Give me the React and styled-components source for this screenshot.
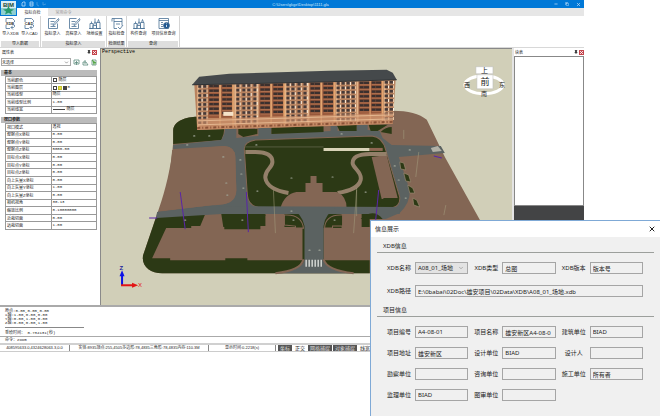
import styled, { createGlobalStyle, css } from 'styled-components';
import { ChevronDown, X, Pin, Minus, Copy } from 'lucide-react';

const GlobalStyle = createGlobalStyle`
	* {
		box-sizing: border-box;
	}

	body {
		margin: 0;
		background: #fff;
		color: #222;
		font-family: 'Liberation Sans', 'Noto Sans CJK SC', sans-serif;
	}

	button,
	input,
	select {
		margin: 0;
		padding: 0;
		font: inherit;
		color: inherit;
	}
`;

const Page = styled.main`
	display: grid;
	width: 100%;
	align-items: start;
`;

const MainWindow = styled.section`
	grid-area: 1 / 1;
	min-width: 0;
	margin-right: 76px;
	display: flex;
	flex-direction: column;
	background: #fff;
	font-size: 4px;
	line-height: 5px;
`;

/* title bar and tabs */

const Header = styled.header`
	display: grid;
	grid-template-columns: 17px 1fr;
	grid-template-rows: 8px 8px;
	background: #e6e6e6;
`;

const LogoButton = styled.button`
	grid-row: 1 / 3;
	border: none;
	background: #0078d7;
	display: flex;
	align-items: center;
	justify-content: center;
`;

const TitleBar = styled.div`
	display: grid;
	grid-template-columns: 1fr 1fr 1fr;
	align-items: center;
	padding: 0 3px;
	background: #0078d7;
	color: #cfe6fa;
`;

const TitleText = styled.span`
	text-align: center;
	white-space: nowrap;
`;

const IconButton = styled.button`
	display: flex;
	align-items: center;
	justify-content: center;
	width: ${props => props.$size || 6}px;
	height: ${props => props.$size || 6}px;
	border: none;
	background: ${props => props.$bg || 'transparent'};
	color: ${props => props.$color || 'inherit'};
`;

const ButtonStrip = styled.div`
	display: flex;
	align-items: center;
	gap: ${props => props.$gap || 2}px;
	justify-content: ${props => (props.$end ? 'flex-end' : 'flex-start')};
`;

const TabRow = styled.nav`
	display: flex;
`;

const Tab = styled.button`
	width: 31px;
	border: none;
	background: ${props => (props.$active ? '#fff' : 'transparent')};
	color: ${props => (props.$active ? '#333' : '#999')};
`;

/* ribbon */

const Ribbon = styled.div`
	display: flex;
	height: 32px;
	border-bottom: 1px solid #d8d8d8;
`;

const RibbonGroup = styled.div`
	display: flex;
	flex-direction: column;
	width: ${props => props.$width}px;
	padding: 1px 1px 0;
	border-right: 1px solid #d4d4d4;
`;

const RibbonButtons = styled.div`
	flex: 1;
	display: flex;
	justify-content: space-around;
`;

const RibbonButton = styled.button`
	display: flex;
	flex-direction: column;
	align-items: center;
	gap: 1px;
	border: none;
	background: none;
	white-space: nowrap;
	line-height: 5px;
`;

const GroupTitle = styled.div`
	background: #dedede;
	text-align: center;
	line-height: 6px;
`;

/* docked panels */

const Workspace = styled.div`
	display: grid;
	grid-template-columns: 101px 1fr 72px;
	height: 257px;
`;

const PropertyPanel = styled.aside`
	display: flex;
	flex-direction: column;
	padding: 0 3px 0 1px;
	border-right: 1px solid #8a8a8a;
`;

const PanelHeader = styled.div`
	display: flex;
	align-items: center;
	justify-content: space-between;
	height: 8px;
	padding-left: 1px;
`;

const SelectionRow = styled.div`
	display: flex;
	align-items: center;
	gap: 2px;
	height: 12px;
	margin-bottom: 2px;
`;

const Picker = styled.div`
	flex: 1;
	display: grid;
	grid-template-columns: 1fr ${props => props.$arrow}px;
	align-items: center;
	height: ${props => props.$height}px;
	border: 1px solid #a8a8a8;
	background: ${props => props.$bg || '#fff'};

	select {
		grid-area: 1 / 1 / 2 / 3;
		width: 100%;
		height: 100%;
		padding-left: ${props => props.$inset || 0}px;
		border: none;
		background: transparent;
		appearance: none;
	}

	svg {
		grid-area: 1 / 2 / 2 / 3;
		pointer-events: none;
	}
`;

const TableWrap = styled.div`
	padding-left: 4px;
`;

const PropertyTable = styled.table`
	width: 100%;
	height: ${props => props.$height}px;
	margin-bottom: 3px;
	border-collapse: collapse;
	table-layout: fixed;

	caption {
		height: 6px;
		margin-left: -4px;
		padding-left: 3px;
		background: #bbb;
		text-align: left;
		font-weight: bold;
		line-height: 6px;
	}

	th,
	td {
		padding: 0 1px;
		border: 1px solid #999;
		text-align: left;
		font-weight: normal;
		line-height: 5px;
		white-space: nowrap;
	}

	td {
		font-family: 'Liberation Mono', 'Noto Sans CJK SC', monospace;
	}
`;

const LayerValue = styled.span`
	display: flex;
	align-items: center;
	gap: ${props => props.$gap || 1}px;
`;

const Swatch = styled.i`
	width: 4px;
	height: 4px;
	border: 1px solid ${props => props.$edge || '#444'};
	background: ${props => props.$color || '#fff'};
`;

const LineSample = styled.i`
	width: 12px;
	border-top: 1px solid #444;
`;

const Viewport = styled.div`
	position: relative;
	overflow: hidden;
	border-top: 1px solid #888;
	background: #d1cfb8;

	> svg {
		display: block;
		width: 100%;
		height: 100%;
	}
`;

const ViewName = styled.span`
	position: absolute;
	top: 1px;
	left: 1px;
	font-family: 'Liberation Mono', monospace;
	font-size: 5px;
	line-height: 5px;
	color: #000;
`;

const BlockPanel = styled.aside`
	display: flex;
	flex-direction: column;
	padding-left: 2px;
	background: #e4e4e4;
`;

const BlockHeader = styled(PanelHeader)`
	background: #fff;
`;

const BlockList = styled.div`
	height: 150px;
	border: 1px solid #888;
	background: #fff;
`;

const BlockPreview = styled.div`
	flex: 1;
	background: #434445;
`;

/* console and status bar */

const Console = styled.div`
	border-top: 2px solid #aaa;
	padding: 0 5px;
	font-family: 'Liberation Mono', 'Noto Sans CJK SC', monospace;
	line-height: 4px;

	p {
		margin: 0;
	}
`;

const LogBlock = styled.div`
	padding-top: 2px;
	height: 20px;
`;

const LogRule = styled.hr`
	width: 79px;
	margin: 0 0 3px;
	border: none;
	border-top: 1px solid #888;
`;

const CommandRow = styled.label`
	display: flex;
	align-items: center;
	height: 7px;
	margin: 1px -5px 0;
	padding-left: 5px;
	border-top: 1px solid #aaa;

	input {
		flex: 1;
		height: 5px;
		border: none;
		background: none;
		outline: none;
	}
`;

const StatusBar = styled.footer`
	display: flex;
	height: 9px;
	border-top: 2px solid #d0d0d0;
	border-bottom: 1px solid #ccc;
	line-height: 6px;
`;

const StatusCell = styled.span`
	width: ${props => props.$width}px;
	border-right: 1px solid #888;
	text-align: center;
	white-space: nowrap;
`;

const StatusToggles = styled.div`
	display: flex;
	gap: 1px;
	padding-left: 2px;
	font-size: 5px;
`;

const Toggle = styled.button`
	padding: 0 2px;
	border: none;
	white-space: nowrap;
	background: ${props => (props.$on ? '#555' : '#fff')};
	color: ${props => (props.$on ? '#ddd' : '#222')};
`;

/* information dialog */

const Dialog = styled.section`
	grid-area: 1 / 1;
	justify-self: end;
	z-index: 1;
	margin-top: 220px;
	width: 290px;
	border-top: 1px solid #7fa9d6;
	border-left: 1px solid #7fa9d6;
	background: #f0f0f0;
	font-family: 'Noto Sans', 'Noto Sans CJK SC', sans-serif;
	font-size: 6px;
	line-height: 8px;
	padding-bottom: 17px;
`;

const DialogHeader = styled.header`
	display: flex;
	align-items: center;
	justify-content: space-between;
	height: 16px;
	padding: 0 4px;
	background: #fff;

	h1 {
		margin: 0;
		font-size: 6px;
		font-weight: normal;
	}
`;

const SectionTitle = styled.h2`
	margin: 0 6px;
	padding: ${props => (props.$first ? 5 : 9)}px 6px 2px;
	border-bottom: 1px solid #9c9f9c;
	font-size: 6px;
	font-weight: normal;
	line-height: 8px;
`;

const FieldGrid = styled.div`
	display: grid;
	grid-template-columns: repeat(3, 1fr);
	gap: ${props => props.$rowGap}px 6px;
	padding: 9px 17px 0 16px;
`;

const FieldRow = styled.div`
	display: grid;
	grid-template-columns: 24px 1fr;
	column-gap: 4px;
	align-items: center;
	${props =>
		props.$wide &&
		css`
			grid-column: 1 / -1;
		`}

	label {
		text-align: center;
		white-space: nowrap;
	}
`;

const TextInput = styled.input`
	width: 100%;
	min-width: 0;
	height: 12px;
	padding: 0 2px;
	border: 1px solid #a5a5a5;
	background: #f0f0f0;
`;

const basicProps = [
	{ name: '当前颜色', value: '随层', swatch: true },
	{ name: '当前图层', value: '0', layer: true },
	{ name: '当前线型', value: '随层' },
	{ name: '当前线型比例', value: '1.00' },
	{ name: '当前线宽', value: '随层', line: true },
];

const viewProps = [
	{ name: '视口模式', value: '透视' },
	{ name: '观察点X坐标', value: '0.00' },
	{ name: '观察点Y坐标', value: '0.00' },
	{ name: '观察点Z坐标', value: '5000.00' },
	{ name: '目标点X坐标', value: '0.00' },
	{ name: '目标点Y坐标', value: '0.00' },
	{ name: '目标点Z坐标', value: '0.00' },
	{ name: '向上矢量X坐标', value: '0.00' },
	{ name: '向上矢量Y坐标', value: '1.00' },
	{ name: '向上矢量Z坐标', value: '0.00' },
	{ name: '相机视角', value: '30.13' },
	{ name: '缩放比例', value: '0.10000000' },
	{ name: '近裁切面', value: '0.00' },
	{ name: '远裁切面', value: '1.00' },
];

const ribbonGroups = [
	{
		title: '导入数据',
		width: 41,
		items: [
			{ label: '导入XDB', icon: 'file', tag: 'XDB' },
			{ label: '导入CAD', icon: 'file', tag: 'CAD' },
		],
	},
	{
		title: '指标录入',
		width: 66,
		items: [
			{ label: '指标录入', icon: 'edit' },
			{ label: '高程录入', icon: 'edit' },
			{ label: '场地设置', icon: 'site' },
		],
	},
	{ title: '检测结果', width: 20, items: [{ label: '指标检查', icon: 'check' }] },
	{
		title: '查询',
		width: 53,
		items: [
			{ label: '构件查询', icon: 'site' },
			{ label: '项目信息查询', icon: 'info' },
		],
	},
];

const projectFields = [
	{ id: 'code', label: '项目编号', value: 'A4-08-01' },
	{ id: 'name', label: '项目名称', value: '雄安新区A4-08-0' },
	{ id: 'builder', label: '建筑单位', value: 'BIAD' },
	{ id: 'address', label: '项目地址', value: '雄安新区' },
	{ id: 'designUnit', label: '设计单位', value: 'BIAD' },
	{ id: 'designer', label: '设计人', value: '' },
	{ id: 'survey', label: '勘察单位', value: '' },
	{ id: 'consult', label: '咨询单位', value: '' },
	{ id: 'construct', label: '施工单位', value: '所有者' },
	{ id: 'supervise', label: '监理单位', value: 'BIAD' },
	{ id: 'review', label: '图审单位', value: '' },
];

function RibbonIcon({ type, tag }) {
	return (
		<svg width="14" height="13" viewBox="0 0 14 13" fill="none" stroke="#4a7196" strokeWidth="0.8">
			{type === 'file' && (
				<>
					<path d="M3 5V1.5h6.5l2 2V5M3 8v3.5h4M10 8.5l-2 2 2 2M8 10.5h2.5q1.500-.5 1-2.500" />
					<text x="7" y="7.500" textAnchor="middle" fontSize="4" fontWeight="bold" fill="#333" stroke="none">
						{tag}
					</text>
				</>
			)}
			{type === 'edit' && <path d="M11.500 6.500v5H2.500v-10h7M4.500 4.500h4M4.500 7h2.500M4.500 9.500h5M12.500 1.500 7.500 7l-.5 1.500 1.500-.5 4.500-5z" />}
			{type === 'site' && <path d="M2 11.500v-5h3v5zM5 11.500v-3h3.500v3M8.500 11.500v-6h3.500v6zM5.500 8 7 4.500 8.500 8M7 1.500v3M9.500 5.500l1-3 1 3M3.500 6.500v-2M1 11.500h12" />}
			{type === 'check' && <path d="M2 1.500h10v7M2 1.500v3M4 1.500v10h3M4 4.500h8M6 7h4M8 10l2 2 3-4" />}
			{type === 'info' && (
				<>
					<path d="M2 1.500h9.500v10H2zM2 3.500h9.500M4 5.500h2M4 7.500h2M4 9.500h2" />
					<circle cx="9.500" cy="8.500" r="3" fill="#1e5791" />
					<path d="M9.500 8v2M9.500 6.500v.7" stroke="#fff" />
				</>
			)}
		</svg>
	);
}

function Logo() {
	return (
		<svg width="15" height="14" viewBox="0 0 15 14">
			<rect width="15" height="14" fill="#d9eef5" />
			<path d="M0 7h15v7H0z" fill="#8fcfd0" />
			<text x="7.500" y="5.600" textAnchor="middle" fontSize="6" fontWeight="bold" fill="#1b4630">
				BIM
			</text>
			<path d="m7.500 5 1.500 3 4 .5-3 2 1 3-3.500-1.700L4 13.500l1-3-3-2 4-.5z" fill="#27996a" />
		</svg>
	);
}

const balconyBays = [209, 222, 260, 273, 310, 323, 359, 371];
const windowBays = [199, 204, 237, 243, 248, 254, 287, 292, 298, 304, 337, 342, 347, 352, 385, 390];
const floors = [0, 1, 2, 3, 4, 5, 6];

// roof line drops slightly from the right end to the left one
const floorY = (x, floor) => 85.5 - (x - 195) / 45 + floor * 4.5;

function Building() {
	return (
		<g>
			<path d="M195 84 396 79 393 124 330 126 198 130Z" fill="#b9835f" />
			{[198, 235, 257, 285, 308, 336, 357, 384].map(x => (
				<path key={x} d={`M${x} ${85 - (x - 195) / 45}h2v43h-2z`} fill="#e3b388" />
			))}
			{balconyBays.map(x => (
				<g key={x}>
					<rect x={x} y={floorY(x, 0)} width="11" height="33" fill="#98583b" />
					{floors.map(f => (
						<g key={f}>
							<rect x={x + 1} y={floorY(x, f)} width="9.500" height="2.400" fill="#3b302e" />
							<path d={`M${x + 1} ${floorY(x, f) + 3.2}h10`} stroke="#b87a56" strokeWidth="0.700" />
							<path d={`M${x + 5} ${floorY(x, f)}v2.400`} stroke="#7b5341" strokeWidth="0.600" />
						</g>
					))}
					<rect x={x + 11} y={floorY(x, 0) - 1} width="1.500" height="43" fill="#e4a670" />
				</g>
			))}
			{windowBays.map((x, i) => (
				<g key={x}>
					{floors.concat(7, 8).map(f => (
						<g key={f}>
							<rect x={x} y={floorY(x, f)} width="3.200" height="2.600" fill="#463a39" />
							<path
								d={`M${x + 3.8} ${floorY(x, f)}v3`}
								stroke={(i + f) % 3 ? '#e6c5a5' : '#fff2df'}
								strokeWidth="1"
							/>
						</g>
					))}
				</g>
			))}
			<path d="M198 119 330 115 394 113 393 124 330 126 198 130Z" fill="#c98d69" opacity="0.650" />
			<path d="M199 121 394 115M199 125 394 119" stroke="#f0c8a0" strokeWidth="0.700" fill="none" />
			<path d="M198 128 393 122" stroke="#8a5237" strokeWidth="2" strokeDasharray="3 2 1 2" fill="none" />
			<path d="M224 112h10v4h-10z" fill="#f5e2c8" />
			<path d="M193 85 200 77 230 74 330 71 387 70 393 73 397 80 330 82Z" fill="#45494b" />
			<path d="M193 85 330 82 397 80" stroke="#2f3335" fill="none" />
		</g>
	);
}

function SiteModel() {
	const brown = '#836654';
	const green = '#2c3915';
	const road = '#5b6261';
	return (
		<svg viewBox="102 49 410 256" preserveAspectRatio="xMidYMid slice">
			<path
				d="M198 117C187 117 175 121 174 130V143C172 168 166 190 160 208L144 255C142 266 151 273 163 273H510L480 220 445 157 427 120Q416 111 393 111Z"
				fill={brown}
			/>
			{/* lawns beside the building */}
			<path d="M198 117C187 117 175 121 174 130V144L222 140Q225 134 225 128L198 130Z" fill={green} />
			<path d="M174 145 222 140Q226 134 226 126H237V138L259 136V125H272V134L331 131V124H338V131L357 130V124H368V130L380 131 383 138 392 145 441 146 445 153 399 157 410 190Q411 202 400 213L386 219H157L158 212 213 205Q236 206 237 190L236 157Q236 147 225 146L174 149Z" fill={road} />
			<path d="M239 129H258V134L244 137 239 134ZM272 127 324 125V132L272 134ZM337 125H357V131H340ZM369 125H388L378 131H371ZM381 132Q386 127 392 127V134Z" fill={green} />
			<path d="M176 150 225 146Q236 147 236 157L237 190Q237 202 225 204L160 211Q171 183 173 150Z" fill={brown} />
			{/* central garden */}
			<path d="M245 150Q244 142 256 140L372 136Q383 137 386 150L400 197Q401 207 390 208H265Q249 208 248 195Z" fill={green} stroke={brown} />
			<path d="M372 157 387 155 398 198 382 199Z" fill={brown} />
			<path d="M245 147H324" stroke="#81806a" strokeWidth="0.500" />
			<path d="M246 152H256C268 152 273 156 273 162S265 170 266 178 277 191 289 193M387 154H370C358 154 353 158 353 163S363 172 361 180 350 191 338 193" fill="none" stroke="#94806a" strokeWidth="4" />
			<path d="M281 208Q285 194 297 192H306V183H311V176H317V183H323V192H337Q347 196 347 208Z" fill={brown} />
			<path d="M324 148H370V151H324Z" fill="#d8d3b7" />
			<path d="M370 148H383V151H370Z" fill="#8e6752" />
			{/* lower lawns and forecourt */}
			<path d="M157 217 222 213H370V273H163C151 273 142 266 144 255Z" fill={green} />
			<path d="M167 228H192V226H201L206 214H222L224 227H225V229H261V226H266V216Q267 214 265 214H285V227H303V260H248V258H226V260H171V258H153Z" fill={brown} />
			<path d="M324 228H342V214H362V227H372V260H324Z" fill={brown} />
			<path d="M157 218 222 214H400V207L213 206 158 212Z" fill={road} />
			<path d="M285 215Q302 214 304 228H296V226L285 225ZM343 215Q326 214 325 228H333V226H343Z" fill={green} stroke={brown} />
			<path d="M290 207H338Q325 214 324 226V259Q327 270 353 273H277Q303 270 305 259V226Q303 214 290 207Z" fill={road} />
			<path d="M276 273Q302 270 304 259M354 273Q327 270 324 259" fill="none" stroke={brown} strokeWidth="2" />
			<path d="M306 263H324" stroke="#e4e6e1" strokeWidth="7" strokeDasharray="1.300 1.700" />
			<path d="M366 215Q376 210 383 219H361ZM384 198H397L393 206 380 205Z" fill={green} />
			<path d="M400 162 404 163 406 170 401 169ZM404 173 409 175 411 182 406 181ZM408 185 413 188 415 193 410 193ZM413 198 417 200 420 207 414 205Z" fill={green} stroke="#98866f" strokeWidth="0.700" />
			<path d="M431 148 438 146 442 151 433 152Z" fill="#b2b1a6" />
			{/* survey lines */}
			<g fill="none" strokeWidth="1" stroke="#5a25a8">
				<path d="M181 192 186 229M247 192 249 232M379 190 376 220M150 218H158M434 156 442 158" />
			</g>
			<path d="M274 190 276 233M357 190 354 233M357 188V216M419 152 416 177M404 130V139M446 205 444 215" fill="none" stroke="#a7a080" strokeWidth="0.500" />
			<g fill="#a2a79a">
				{[[188, 145], [241, 160], [242, 174], [244, 188], [224, 157], [227, 183], [228, 195], [292, 178], [333, 177], [258, 191], [366, 192], [186, 220], [243, 220], [294, 220], [335, 220], [310, 250], [320, 250], [395, 166], [399, 180], [406, 198], [410, 150], [257, 145], [372, 143], [195, 136], [210, 136], [342, 134], [292, 211]].map(([x, y]) => (
					<ellipse key={`${x}-${y}`} cx={x} cy={y} rx="1.200" ry="0.600" />
				))}
			</g>
			<Building />
			{/* view cube */}
			<ellipse cx="484" cy="85" rx="19" ry="9" fill="none" stroke="#fff" strokeWidth="3" />
			<path d="M476 67H493V74H476ZM477 75H493V89H477Z" fill="#fff" stroke="#bbb" strokeWidth="0.500" />
			<g fontFamily="Noto Sans CJK SC, sans-serif" textAnchor="middle" fill="#222">
				<text x="484.500" y="73" fontSize="7">上</text>
				<text x="485" y="85.500" fontSize="9">前</text>
				<text x="467" y="87" fontSize="6">西</text>
				<text x="502" y="87" fontSize="6">东</text>
				<text x="484" y="96" fontSize="6">南</text>
			</g>
			{/* axes */}
			<path d="M123 285V275" stroke="#0c12e8" strokeWidth="2" />
			<path d="M123 270 125.500 276H120.500Z" fill="#0c12e8" />
			<path d="M122 285H134" stroke="#e31515" strokeWidth="2" />
			<path d="M139 285 133 287.500V282.500Z" fill="#e31515" />
			<text x="120.500" y="270" fontSize="6" fontWeight="bold" fill="#1c1c9c">Z</text>
			<text x="139" y="287" fontSize="6" fill="#e31515">X</text>
		</svg>
	);
}

function DockButtons() {
	return (
		<ButtonStrip $gap={1}>
			<IconButton $size={5} aria-label="固定">
				<Pin size={4} fill="#222" strokeWidth={3} />
			</IconButton>
			<IconButton $size={5} $bg="#c4434b" $color="#fff" aria-label="关闭">
				<X size={5} strokeWidth={4} />
			</IconButton>
		</ButtonStrip>
	);
}

function Properties({ title, rows, height }) {
	return (
		<TableWrap>
			<PropertyTable $height={height}>
				<caption>{title}</caption>
				<tbody>
					{rows.map(row => (
						<tr key={row.name}>
							<th scope="row">{row.name}</th>
							<td>
								<LayerValue $gap={row.layer ? 1 : 2}>
									{(row.swatch || row.layer) && <Swatch />}
									{row.layer && <Swatch $color="#e8e040" $edge="#c4c030" />}
									{row.layer && <Swatch $color="#444" />}
									{row.line && <LineSample />}
									{row.value}
								</LayerValue>
							</td>
						</tr>
					))}
				</tbody>
			</PropertyTable>
		</TableWrap>
	);
}

function InfoDialog() {
	return (
		<Dialog role="dialog" aria-labelledby="dialogTitle">
			<DialogHeader>
				<h1 id="dialogTitle">信息展示</h1>
				<IconButton $size={8} aria-label="关闭">
					<X size={8} strokeWidth={3} />
				</IconButton>
			</DialogHeader>
			<SectionTitle $first>XDB信息</SectionTitle>
			<FieldGrid $rowGap={11}>
				<FieldRow>
					<label htmlFor="xdbName">XDB名称</label>
					<Picker $arrow={9} $height={12} $bg="#e3e3e3" $inset={2}>
						<select id="xdbName">
							<option>A08_01_场地</option>
						</select>
						<ChevronDown size={6} color="#777" />
					</Picker>
				</FieldRow>
				<FieldRow>
					<label htmlFor="xdbType">XDB类型</label>
					<TextInput id="xdbType" defaultValue="总图" />
				</FieldRow>
				<FieldRow>
					<label htmlFor="xdbVersion">XDB版本</label>
					<TextInput id="xdbVersion" defaultValue="版本号" />
				</FieldRow>
				<FieldRow $wide>
					<label htmlFor="xdbPath">XDB路径</label>
					<TextInput id="xdbPath" defaultValue="E:\0babai\02Doc\雄安项目\02Data\XDB\A08_01_场地.xdb" />
				</FieldRow>
			</FieldGrid>
			<SectionTitle>项目信息</SectionTitle>
			<FieldGrid $rowGap={9}>
				{projectFields.map(field => (
					<FieldRow key={field.id}>
						<label htmlFor={field.id}>{field.label}</label>
						<TextInput id={field.id} defaultValue={field.value} />
					</FieldRow>
				))}
			</FieldGrid>
		</Dialog>
	);
}

export default function App() {
	return (
		<Page>
			<GlobalStyle />
			<MainWindow>
				<Header>
					<LogoButton aria-label="BIM">
						<Logo />
					</LogoButton>
					<TitleBar>
						<ButtonStrip>
							<svg width="30" height="6" viewBox="0 0 30 6" fill="none" stroke="#b9dcfa" strokeWidth="0.800">
								<path d="M2 2v3h3V1H3zM10 1h3v4h-3zM10 3h3" />
								<path d="M17 1v3l2 1M23 1v3l3-1" stroke="#4b9ee0" />
							</svg>
						</ButtonStrip>
						<TitleText>C:\Users\gkge\Desktop\1111.gla</TitleText>
						<ButtonStrip $end $gap={5}>
							<IconButton aria-label="最小化">
								<Minus size={4} strokeWidth={4} />
							</IconButton>
							<IconButton aria-label="还原">
								<Copy size={4} strokeWidth={3} />
							</IconButton>
							<IconButton aria-label="关闭">
								<X size={5} strokeWidth={3} />
							</IconButton>
						</ButtonStrip>
					</TitleBar>
					<TabRow>
						<Tab $active>指标自检</Tab>
						<Tab>常用命令</Tab>
					</TabRow>
				</Header>
				<Ribbon>
					{ribbonGroups.map(group => (
						<RibbonGroup key={group.title} $width={group.width}>
							<RibbonButtons>
								{group.items.map(item => (
									<RibbonButton key={item.label}>
										<RibbonIcon type={item.icon} tag={item.tag} />
										{item.label}
									</RibbonButton>
								))}
							</RibbonButtons>
							<GroupTitle>{group.title}</GroupTitle>
						</RibbonGroup>
					))}
				</Ribbon>
				<Workspace>
					<PropertyPanel>
						<PanelHeader>
							属性表
							<DockButtons />
						</PanelHeader>
						<SelectionRow>
							<Picker $arrow={6} $height={8}>
								<select aria-label="选择">
									<option>未选择</option>
								</select>
								<ChevronDown size={5} />
							</Picker>
							<svg width="24" height="7" viewBox="0 0 24 7" fill="none" stroke="#5c8a7c" strokeWidth="0.800">
								<path d="M1 1h5v4H1zM3.500 2v4M2 3.500h3M12 1v4M10 3h3l2 3h-5zM19 1h4v5h-4z" />
								<path d="m19 1 4 3h-2v2" fill="#52a545" stroke="#52a545" />
							</svg>
						</SelectionRow>
						<Properties title="基本" rows={basicProps} height={38} />
						<Properties title="视口参数" rows={viewProps} height={107} />
					</PropertyPanel>
					<Viewport>
						<SiteModel />
						<ViewName>Perspective</ViewName>
					</Viewport>
					<BlockPanel>
						<BlockHeader>
							块表
							<DockButtons />
						</BlockHeader>
						<BlockList />
						<BlockPreview />
					</BlockPanel>
				</Workspace>
				<Console>
					<LogBlock>
						<p>原点:0.00,0.00,0.00</p>
						<p>X轴:1.00,0.00,0.00</p>
						<p>Y轴:0.00,1.00,0.00</p>
						<p>Z轴:0.00,0.00,1.00</p>
					</LogBlock>
					<LogRule />
					<p>重绘时间： 0.734131(秒)</p>
					<CommandRow>
						命令：
						<input defaultValue="zoom" />
					</CommandRow>
				</Console>
				<StatusBar>
					<StatusCell $width={70}>408595633.0,4324628063.3,0.0</StatusCell>
					<StatusCell $width={139}>实体:8935顶点:255,4505多边形:78,4835三角形:78,4835内存:110.3M</StatusCell>
					<StatusCell $width={67}>显示时间:0.2218(s)</StatusCell>
					<StatusToggles>
						<Toggle $on>坐标</Toggle>
						<Toggle>正交</Toggle>
						<Toggle $on>网格捕捉</Toggle>
						<Toggle $on>对象捕捉</Toggle>
						<Toggle>线宽</Toggle>
						<Toggle $on>动态</Toggle>
					</StatusToggles>
				</StatusBar>
			</MainWindow>
			<InfoDialog />
		</Page>
	);
}
